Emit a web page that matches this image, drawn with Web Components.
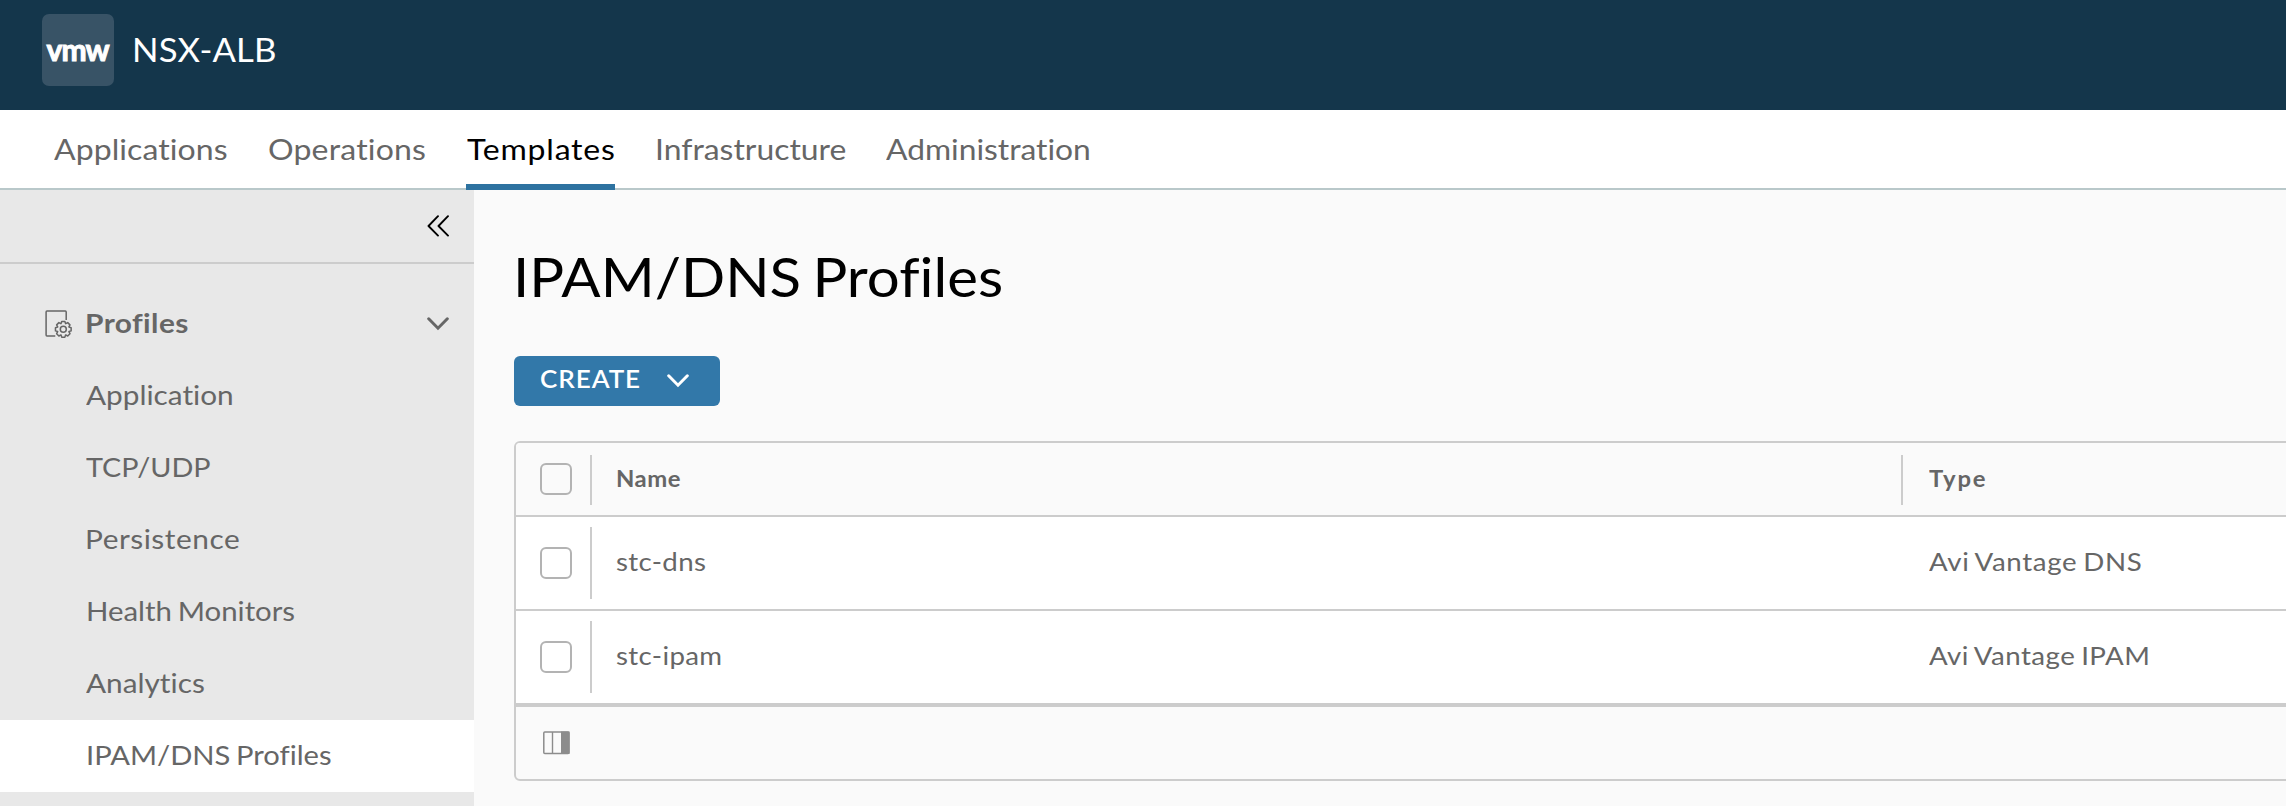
<!DOCTYPE html>
<html lang="en">
<head>
<meta charset="utf-8">
<title>NSX-ALB</title>
<style>
html,body{margin:0;height:100%;overflow:hidden;background:#fafafa}
body{font-family:Lato,"Open Sans",sans-serif;color:#666}
</style>
</head>
<body>
<alb-app></alb-app>
<script>
const define=(name,html,setup)=>customElements.define(name,class extends HTMLElement{
  connectedCallback(){
    if(this.shadowRoot)return;
    this.attachShadow({mode:'open'}).innerHTML=html;
    if(setup)setup.call(this,this.shadowRoot);
  }
});

/* A single line of text, widened a little and tracked so that it spans a given width. */
const ctx=document.createElement('canvas').getContext('2d');
define('text-run',`<style>
:host{display:block;white-space:nowrap;font-variant-ligatures:none;flex:none}
span{display:block;transform-origin:0 0}
</style><span><slot></slot></span>`,function(root){
  const size=+this.getAttribute('size'),weight=this.getAttribute('weight')||400,
    span=+this.getAttribute('span'),line=this.getAttribute('line'),text=this.textContent,
    s=root.querySelector('span');
  ctx.font=`${weight} ${size*10}px Lato, "Open Sans", sans-serif`;
  ctx.letterSpacing='0.01px';
  const m=ctx.measureText(text),left=m.actualBoundingBoxLeft/10;
  const word=-.06*size,spaces=text.split(' ').length-1;
  const ink=left+m.actualBoundingBoxRight/10+word*spaces;
  const scale=Math.max(1,Math.min(span/ink,1.085));
  const track=(span/scale-ink)/(text.length-1);
  /* optical alignment of the first letter: diagonals hang out, stems sit in */
  const hang=size>40?0:/^[AT]/.test(text)?-.7:/^[NPHI]/.test(text)?.8:0;
  this.style.cssText=`width:${span}px;line-height:${line}px;height:${line}px;font-size:${size}px;font-weight:${weight}`;
  s.style.letterSpacing=track.toFixed(3)+'px';
  s.style.wordSpacing=word.toFixed(2)+'px';
  s.style.marginLeft=(left*scale+hang).toFixed(2)+'px';
  s.style.transform=`scaleX(${scale.toFixed(4)})`;
});

define('app-header',`<style>
:host{display:flex;align-items:center;height:100px;padding:0 42px 10px;background:#14364b;color:#fff}
.logo{width:72px;height:72px;border-radius:7px;background:#385366;display:flex;align-items:center;justify-content:center;margin-right:20px}
.logo text-run{-webkit-text-stroke:1px #fff;stroke-linejoin:round;padding-bottom:3px}
.name{padding-bottom:1px}
</style>
<div class="logo"><text-run size="30" weight="700" span="63" line="66">vmw</text-run></div>
<text-run class="name" size="32" span="140.5" line="32">NSX-ALB</text-run>`);

define('nav-tab',`<style>
:host{display:block;height:80px;padding:0 1px;box-sizing:border-box;color:#666}
:host([active]){color:#000;border-bottom:6px solid #2d72a0}
</style><slot></slot>`);

define('top-nav',`<style>
:host{display:flex;gap:40px;height:80px;box-sizing:border-box;padding-left:54px;background:linear-gradient(#b9c8ca,#b9c8ca) 0 100%/100% 2px no-repeat #fff}
</style>
<nav-tab><text-run size="29.5" span="172.7" line="77">Applications</text-run></nav-tab>
<nav-tab><text-run size="29.5" span="155.6" line="77">Operations</text-run></nav-tab>
<nav-tab active><text-run size="29.5" span="147" line="77">Templates</text-run></nav-tab>
<nav-tab><text-run size="29.5" span="188" line="77">Infrastructure</text-run></nav-tab>
<nav-tab><text-run size="29.5" span="203" line="77">Administration</text-run></nav-tab>`);

define('side-item',`<style>
:host{display:flex;height:72px;padding-left:87px}
:host([selected]){background:#fff}
</style><slot></slot>`);

define('profiles-icon',`<style>:host{display:block;width:28px;height:28px}svg{display:block}</style>
<svg width="28" height="28" viewBox="0 0 28 28" fill="none" stroke="#666" stroke-width="1.5">
<path d="M21.2 10V1.9Q21.2 1 20.3 1H2Q1.1 1 1.1 1.900V25Q1.100 26 2 26H10.300"/>
<circle cx="18.300" cy="19.300" r="3"/>
<path id="gear" stroke-linejoin="round"/></svg>`,function(root){
  const cx=18.3,cy=19.3,pts=[];
  for(let i=0;i<8;i++)[[-.38,6.1],[-.2,8],[.2,8],[.38,6.1]].forEach(([d,r])=>{
    const a=i*Math.PI/4+d;
    pts.push((cx+r*Math.cos(a)).toFixed(2)+' '+(cy+r*Math.sin(a)).toFixed(2));
  });
  root.getElementById('gear').setAttribute('d','M'+pts.join('L')+'Z');
});

define('chevron-down',`<style>:host{display:block;width:22px;height:14px}svg{display:block}</style>
<svg width="22" height="14" viewBox="0 0 22 14" fill="none" stroke="currentColor" stroke-width="3" stroke-linecap="round" stroke-linejoin="miter"><path d="M1.700 1.800L11 11.200L20.300 1.800"/></svg>`);

define('side-nav',`<style>
:host{display:block;width:474px;background:#e8e8e8;flex:none}
.collapse{height:72px;border-bottom:2px solid #ccc;display:flex;justify-content:flex-end;padding-right:25px}
.collapse svg{margin-top:25px}
.group{display:flex;height:72px;margin-top:24px;padding:0 25px 0 45px}
profiles-icon{margin:22px 14px 0 0}
chevron-down{margin:29px 0 0 auto}
</style>
<div class="collapse"><svg width="22" height="22" viewBox="0 0 22 22" fill="none" stroke="#000" stroke-width="1.900" stroke-linecap="round" stroke-linejoin="round"><path d="M11 1.200L1.500 11L11 20.600M21 1.200L11.500 11L21 20.600"/></svg></div>
<div class="group"><profiles-icon></profiles-icon><text-run size="27.500" weight="700" span="100.500" line="69">Profiles</text-run><chevron-down></chevron-down></div>
<side-item><text-run size="27.500" span="146" line="69">Application</text-run></side-item>
<side-item><text-run size="27.500" span="124" line="69">TCP/UDP</text-run></side-item>
<side-item><text-run size="27.500" span="151.500" line="69">Persistence</text-run></side-item>
<side-item><text-run size="27.500" span="206" line="69">Health Monitors</text-run></side-item>
<side-item><text-run size="27.500" span="118" line="69">Analytics</text-run></side-item>
<side-item selected><text-run size="27.500" span="242.500" line="69">IPAM/DNS Profiles</text-run></side-item>`);

define('create-button',`<style>
:host{display:flex;width:206px;height:50px;border-radius:6px;background:#3278a9;color:#fff;box-sizing:border-box;padding-left:27px}
chevron-down{margin:18px 0 0 28px}
</style><text-run size="24" weight="600" span="98" line="46">CREATE</text-run><chevron-down></chevron-down>`);

define('check-box',`<style>:host{display:block;box-sizing:border-box;width:32px;height:32px;border:2px solid #b3b3b3;border-radius:6px}</style>`);

define('grid-row',`<style>
:host{display:grid;grid-template-columns:76px 1311px 1fr;height:92px;background:#fff;border-bottom:2px solid #ccc}
:host([head]){height:72px;background:#fafafa}
:host([last]){border-bottom-width:4px}
.check{border-right:2px solid #ccc;margin:10px 0;padding:20px 0 0 24px}
:host([head]) .check{margin:12px 0 10px;padding-top:8px}
.name{padding-left:25px;display:flex;justify-content:space-between}
:host([head]) .name::after{content:"";width:2px;margin:12px 0 10px;background:#ccc}
.type{padding-left:27px}
</style>
<div class="check"><check-box></check-box></div>
<div class="name"><slot name="name"></slot></div>
<div class="type"><slot name="type"></slot></div>`);

define('data-grid',`<style>
:host{display:block;width:1900px;border:2px solid #ccc;border-radius:6px;overflow:hidden}
.foot{height:72px;padding-left:27px}
.foot svg{display:block;padding-top:24px}
</style>
<grid-row head><text-run slot="name" size="22" weight="700" span="62" line="71">Name</text-run><text-run slot="type" size="22" weight="700" span="55.500" line="71">Type</text-run></grid-row>
<grid-row><text-run slot="name" size="25.500" span="88" line="88">stc-dns</text-run><text-run slot="type" size="25.500" span="212.500" line="88">Avi Vantage DNS</text-run></grid-row>
<grid-row last><text-run slot="name" size="25.500" span="103.500" line="88">stc-ipam</text-run><text-run slot="type" size="25.500" span="219.500" line="88">Avi Vantage IPAM</text-run></grid-row>
<div class="foot"><svg width="27" height="24" viewBox="0 0 27 24"><rect x=".800" y="1" width="25.200" height="21.600" rx="1" fill="none" stroke="#8c8c8c" stroke-width="1.500"/><path d="M9.500 1V22.500" stroke="#8c8c8c" stroke-width="1.400"/><path d="M18 .500H26.500V23H18Z" fill="#8c8c8c"/></svg></div>`);

define('profiles-page',`<style>
:host{display:block;flex:none;width:1812px;overflow:hidden;box-sizing:border-box;padding:58px 0 0 40px;background:#fafafa}
.title{color:#000;margin:0 0 52px 4px;font:inherit}
create-button{margin-bottom:35px}
</style>
<h1 class="title"><text-run size="54.500" span="484" line="56">IPAM/DNS Profiles</text-run></h1>
<create-button></create-button>
<data-grid></data-grid>`);

define('alb-app',`<style>
:host{display:flex;flex-direction:column;height:806px;width:2286px;overflow:hidden}
.body{display:flex;flex:1;min-height:0}
</style>
<app-header></app-header><top-nav></top-nav>
<div class="body"><side-nav></side-nav><profiles-page></profiles-page></div>`);
</script>
</body>
</html>
